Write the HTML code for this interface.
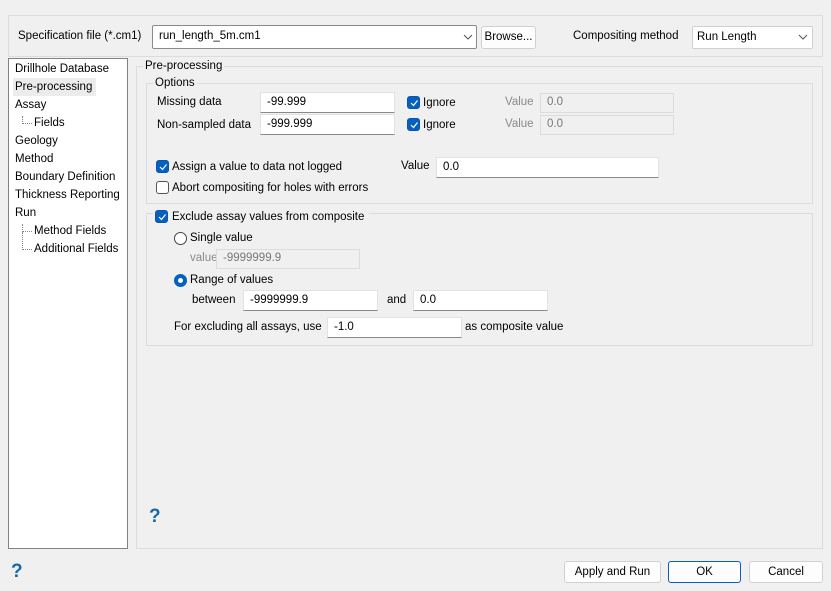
<!DOCTYPE html>
<html><head><meta charset="utf-8"><style>
*{box-sizing:border-box;margin:0;padding:0}
body{width:831px;height:591px;background:#f0f0f0;font-family:"Liberation Sans",sans-serif;font-size:11.5px;color:#000;position:relative;overflow:hidden}
.a{position:absolute;white-space:nowrap}
.t{position:absolute;white-space:nowrap;line-height:14px}
.box{position:absolute;border:1px solid #dcdcdc}
.in{position:absolute;background:#fff;border:1px solid #e2e2e2;border-bottom:1px solid #8a8a8a;padding-left:6px;line-height:18px}
.dis{position:absolute;background:#f0f0f0;border:1px solid #dcdcdc;color:#777;padding-left:6px;line-height:17px}
.cb{position:absolute;width:13px;height:13px;border-radius:3px;background:#0560c0;border:1px solid #0a55a8}
.cb svg{position:absolute;left:1px;top:1px}
.cbe{position:absolute;width:13px;height:13px;border-radius:3px;background:#fff;border:1px solid #555}
.btn{position:absolute;background:#fdfdfd;border:1px solid #d0d0d0;border-radius:3px;text-align:center}
.lg{background:#f0f0f0;padding:0 2px}
.gr{color:#8a8a8a}
</style></head><body>
<div class="box" style="left:8px;top:15px;width:815px;height:42px"></div>
<div class="t" style="left:18px;top:29px">Specification file (*.cm1)</div>
<div class="in" style="left:152px;top:25px;width:325px;height:24px;border:1px solid #8a8a8a;border-radius:2px;line-height:20px">run_length_5m.cm1</div>
<svg class="a" style="left:463px;top:34px" width="10" height="6"><path d="M1 1 L5 5 L9 1" fill="none" stroke="#555" stroke-width="1"/></svg>
<div class="btn" style="left:481px;top:26px;width:55px;height:23px;line-height:21px">Browse...</div>
<div class="t" style="left:573px;top:29px">Compositing method</div>
<div class="in" style="left:692px;top:26px;width:121px;height:23px;border:1px solid #cfcfcf;border-radius:2px;line-height:21px;padding-left:4px">Run Length</div>
<svg class="a" style="left:798px;top:34px" width="10" height="6"><path d="M1 1 L5 5 L9 1" fill="none" stroke="#555" stroke-width="1"/></svg>

<div class="a" style="left:8px;top:58px;width:120px;height:491px;background:#fff;border:1px solid #828282"></div>
<div class="a" style="left:13px;top:78px;width:83px;height:18px;background:#ececec"></div>
<div class="t" style="left:15px;top:62px">Drillhole Database</div>
<div class="t" style="left:15px;top:80px">Pre-processing</div>
<div class="t" style="left:15px;top:98px">Assay</div>
<div class="a" style="left:22px;top:116px;width:10px;height:8px;border-left:1px dotted #888;border-bottom:1px dotted #888"></div>
<div class="t" style="left:34px;top:116px">Fields</div>
<div class="t" style="left:15px;top:134px">Geology</div>
<div class="t" style="left:15px;top:152px">Method</div>
<div class="t" style="left:15px;top:170px">Boundary Definition</div>
<div class="t" style="left:15px;top:188px">Thickness Reporting</div>
<div class="t" style="left:15px;top:206px">Run</div>
<div class="a" style="left:22px;top:224px;width:10px;height:8px;border-left:1px dotted #888;border-bottom:1px dotted #888"></div>
<div class="a" style="left:22px;top:232px;width:10px;height:18px;border-left:1px dotted #888;border-bottom:1px dotted #888"></div>
<div class="t" style="left:34px;top:224px">Method Fields</div>
<div class="t" style="left:34px;top:242px">Additional Fields</div>

<div class="box" style="left:136px;top:66px;width:687px;height:483px"></div>
<div class="t lg" style="left:143px;top:59px">Pre-processing</div>
<div class="box" style="left:146px;top:83px;width:667px;height:121px"></div>
<div class="t lg" style="left:153px;top:76px">Options</div>
<div class="t" style="left:157px;top:95px">Missing data</div>
<div class="in" style="left:260px;top:92px;width:135px;height:21px">-99.999</div>
<div class="t" style="left:157px;top:118px">Non-sampled data</div>
<div class="in" style="left:260px;top:114px;width:135px;height:21px">-999.999</div>
<div class="cb" style="left:407px;top:96px"><svg width="10" height="10"><path d="M2 5 L4.5 7.5 L8.5 2.5" fill="none" stroke="#fff" stroke-width="1.2"/></svg></div>
<div class="t" style="left:423px;top:96px">Ignore</div>
<div class="cb" style="left:407px;top:118px"><svg width="10" height="10"><path d="M2 5 L4.5 7.5 L8.5 2.5" fill="none" stroke="#fff" stroke-width="1.2"/></svg></div>
<div class="t" style="left:423px;top:118px">Ignore</div>
<div class="t gr" style="left:505px;top:95px">Value</div>
<div class="dis" style="left:540px;top:93px;width:134px;height:20px">0.0</div>
<div class="t gr" style="left:505px;top:117px">Value</div>
<div class="dis" style="left:540px;top:115px;width:134px;height:20px">0.0</div>
<div class="cb" style="left:156px;top:160px"><svg width="10" height="10"><path d="M2 5 L4.5 7.5 L8.5 2.5" fill="none" stroke="#fff" stroke-width="1.2"/></svg></div>
<div class="t" style="left:172px;top:160px">Assign a value to data not logged</div>
<div class="t" style="left:401px;top:159px">Value</div>
<div class="in" style="left:436px;top:157px;width:223px;height:21px">0.0</div>
<div class="cbe" style="left:156px;top:181px"></div>
<div class="t" style="left:172px;top:181px">Abort compositing for holes with errors</div>

<div class="box" style="left:146px;top:213px;width:667px;height:133px"></div>
<div class="a lg" style="left:153px;top:208px;width:216px;height:16px"></div>
<div class="cb" style="left:155px;top:210px"><svg width="10" height="10"><path d="M2 5 L4.5 7.5 L8.5 2.5" fill="none" stroke="#fff" stroke-width="1.2"/></svg></div>
<div class="t" style="left:172px;top:210px">Exclude assay values from composite</div>
<div class="a" style="left:174px;top:232px;width:13px;height:13px;border-radius:50%;border:1px solid #444;background:#fff"></div>
<div class="t" style="left:190px;top:231px">Single value</div>
<div class="t gr" style="left:190px;top:251px">value</div>
<div class="dis" style="left:216px;top:249px;width:144px;height:20px">-9999999.9</div>
<div class="a" style="left:174px;top:274px;width:13px;height:13px;border-radius:50%;border:4px solid #0560c0;background:#fff"></div>
<div class="t" style="left:190px;top:273px">Range of values</div>
<div class="t" style="left:192px;top:293px">between</div>
<div class="in" style="left:243px;top:290px;width:135px;height:21px">-9999999.9</div>
<div class="t" style="left:387px;top:293px">and</div>
<div class="in" style="left:413px;top:290px;width:135px;height:21px">0.0</div>
<div class="t" style="left:174px;top:320px">For excluding all assays, use</div>
<div class="in" style="left:327px;top:317px;width:135px;height:21px">-1.0</div>
<div class="t" style="left:465px;top:320px">as composite value</div>

<div class="a" style="left:149px;top:506px;font-size:19px;font-weight:bold;color:#1768a6">?</div>
<div class="a" style="left:11px;top:561px;font-size:19px;font-weight:bold;color:#1768a6">?</div>
<div class="btn" style="left:564px;top:561px;width:97px;height:22px;line-height:20px">Apply and Run</div>
<div class="btn" style="left:668px;top:561px;width:73px;height:22px;line-height:20px;border-color:#0560c0">OK</div>
<div class="btn" style="left:749px;top:561px;width:74px;height:22px;line-height:20px">Cancel</div>
</body></html>
